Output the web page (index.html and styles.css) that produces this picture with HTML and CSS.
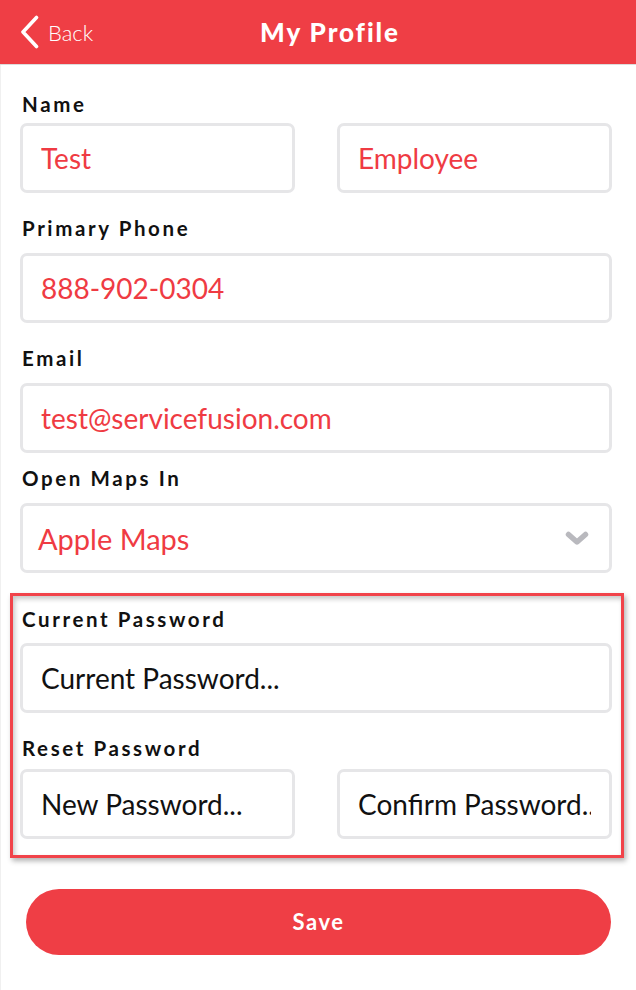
FILE: index.html
```html
<!DOCTYPE html>
<html>
<head>
    <title>My Profile</title>
    <link rel="stylesheet" href="styles.css">
</head>
<body>
<div class="page">
    <div class="topbar">
        <a class="back" href="#">
            <svg width="20" height="34" viewBox="0 0 20 34">
                <polyline points="16.5,2.5 3,17 16.5,31.5" fill="none" stroke="#fff" stroke-width="3.6" stroke-linecap="round" stroke-linejoin="round"/>
            </svg>
            <span>Back</span>
        </a>
        <div class="title">My Profile</div>
    </div>

    <div class="form">
        <div class="field field-first">
            <div class="label label-tight">Name</div>
            <div class="pair">
                <input class="box" type="text" value="Test">
                <input class="box" type="text" value="Employee">
            </div>
        </div>
        <div class="field">
            <div class="label">Primary Phone</div>
            <input class="box" type="text" value="888-902-0304">
        </div>
        <div class="field">
            <div class="label">Email</div>
            <input class="box" type="text" value="test@servicefusion.com">
        </div>
        <div class="field field-near">
            <div class="label">Open Maps In</div>
            <div class="box select">
                <span>Apple Maps</span>
                <svg width="24" height="15" viewBox="0 0 24 15">
                    <polyline points="3.5,3.5 12,11 20.5,3.5" fill="none" stroke="#b9b9be" stroke-width="5.5" stroke-linecap="round" stroke-linejoin="round"/>
                </svg>
            </div>
        </div>

        <div class="highlight">
            <div class="field field-top">
                <div class="label label-mid">Current Password</div>
                <input class="box" type="password" placeholder="Current Password...">
            </div>
            <div class="field">
                <div class="label label-short">Reset Password</div>
                <div class="pair">
                    <input class="box" type="password" placeholder="New Password...">
                    <input class="box" type="password" placeholder="Confirm Password...">
                </div>
            </div>
        </div>

        <a class="save" href="#">Save</a>
    </div>
</div>
</body>
</html>
```

FILE: styles.css
```css
body {
    margin: 0;
    background-color: white;
    font-family: Lato, "Open Sans", sans-serif;
}
.page {
    min-height: 990px;
    box-shadow: inset 1px 0 0 #f0f0f0;
}
.topbar {
    height: 65px;
    box-sizing: border-box;
    border-bottom: 1px solid #dcdcdc;
    background-color: #ef3e45;
    color: white;
    display: flex;
    align-items: center;
}
.back {
    width: 110px;
    padding-left: 20px;
    box-sizing: border-box;
    display: flex;
    align-items: center;
    color: white;
    text-decoration: none;
    font-size: 22px;
    font-weight: 300;
}
.back svg {
    margin-right: 8px;
}
.title {
    flex: 1;
    text-align: center;
    padding-right: 86px;
    font-size: 26px;
    font-weight: 900;
    letter-spacing: 1.9px;
}
.form {
    padding: 0 24px 0 20px;
}
.field {
    margin-top: 25px;
}
.field-first {
    margin-top: 29px;
}
.field-near {
    margin-top: 15px;
}
.field-top {
    margin-top: 0;
}
.label {
    margin-left: 2px;
    margin-bottom: 15px;
    font-size: 20.5px;
    line-height: 20px;
    font-weight: 700;
    letter-spacing: 2.6px;
    color: #111;
}
.label-tight {
    margin-bottom: 9px;
}
.label-short {
    margin-bottom: 11px;
}
.label-mid {
    margin-bottom: 14px;
}
.pair {
    display: flex;
    gap: 42px;
}
.box {
    display: block;
    width: 100%;
    height: 70px;
    box-sizing: border-box;
    margin: 0;
    padding: 0 18px;
    border: 3px solid #e6e6e8;
    border-radius: 7px;
    background-color: white;
    font-family: Lato, "Open Sans", sans-serif;
    font-size: 28px;
    color: #ef3b43;
    outline: none;
}
.pair .box {
    flex: 1;
    min-width: 0;
}
.box::placeholder {
    color: #111;
    opacity: 1;
}
.select {
    display: flex;
    align-items: center;
    justify-content: space-between;
    padding: 0 20px 0 15px;
    font-size: 29px;
}
.highlight {
    margin: 20px -12px 0 -10px;
    padding: 13px 9px 16px 7px;
    border: 3px solid #f1434a;
    box-shadow: 2px 3px 5px rgba(0, 0, 0, 0.3), inset 2px 3px 5px rgba(0, 0, 0, 0.22);
}
.save {
    display: block;
    margin: 31px 1px 0 6px;
    height: 66px;
    line-height: 66px;
    border-radius: 33px;
    background-color: #ef3e45;
    color: white;
    text-align: center;
    text-decoration: none;
    font-size: 22px;
    font-weight: 700;
    letter-spacing: 1.5px;
}
```
